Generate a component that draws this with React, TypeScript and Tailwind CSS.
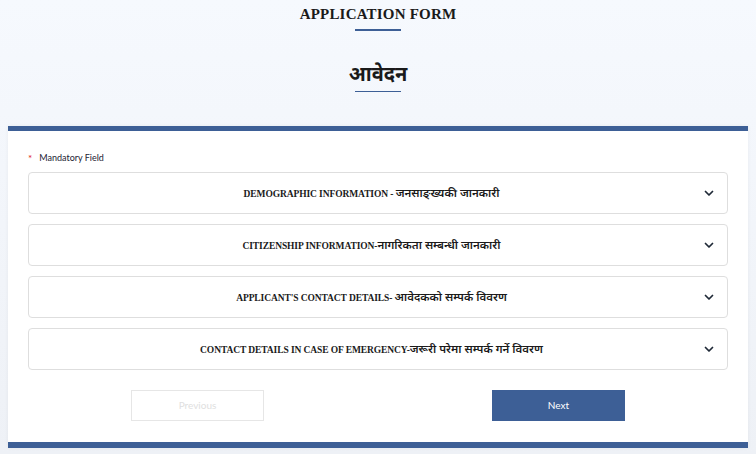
import React from "react";

const items: [string, string][] = [
  ["DEMOGRAPHIC INFORMATION - ", "जनसाङ्ख्यकी जानकारी"],
  ["CITIZENSHIP INFORMATION-", "नागरिकता सम्बन्धी जानकारी"],
  ["APPLICANT'S CONTACT DETAILS- ", "आवेदकको सम्पर्क विवरण"],
  ["CONTACT DETAILS IN CASE OF EMERGENCY-", "जरूरी परेमा सम्पर्क गर्ने विवरण"],
];

function Chevron() {
  return (
    <svg width="12" height="12" viewBox="0 0 24 24" fill="none" stroke="#1f2937" strokeWidth="3.5" strokeLinecap="round" strokeLinejoin="round">
      <path d="M5 9l7 7 7-7" />
    </svg>
  );
}

export default function App() {
  return (
    <div className="w-[756px] h-[454px] overflow-hidden bg-gradient-to-b from-[#f6f9fe] to-[#eef1f6] flex flex-col items-center" style={{ fontFamily: '"Liberation Serif", "Noto Sans", serif' }}>
      <div className="flex flex-col items-center pt-[4px]">
        <h1 className="text-[15px] leading-[20px] font-bold text-[#1a1a1a] tracking-[0.2px]" style={{ fontFamily: '"Liberation Serif", serif' }}>APPLICATION FORM</h1>
        <div className="w-[46px] h-[1.5px] bg-[#3d5f96] mt-[5px]" />
        <h2 className="mt-[30px] text-[20px] leading-[26px] font-bold text-[#1a1a1a]" style={{ fontFamily: '"Noto Sans", sans-serif' }}>आवेदन</h2>
        <div className="w-[46px] h-[1.5px] bg-[#3d5f96] mt-[4px]" />
      </div>
      <div className="mt-[34px] w-[740px] bg-white border-t-[5px] border-b-[6px] border-[#3d5f96] shadow-[0_0_4px_rgba(0,0,0,0.05)] px-[20px] pt-[21px] pb-[21px]">
        <div className="flex items-center gap-[7px] text-[9px] text-[#223] h-[12px]" style={{ fontFamily: 'Lato, sans-serif' }}>
          <span className="text-[#e02424] text-[10px] leading-none">*</span>
          <span>Mandatory Field</span>
        </div>
        <div className="mt-[8px] flex flex-col gap-[10px]">
          {items.map(([en, ne]) => (
            <div key={en} className="h-[42px] border border-[#dedede] rounded-[4px] flex items-center relative">
              <span className="flex-1 pr-[13px] text-center text-[#1a1a1a] whitespace-pre leading-[16px]">
                <span className="text-[9.5px] font-bold tracking-[-0.1px]" style={{ fontFamily: '"Liberation Serif", serif' }}>{en}</span>
                <span className="text-[11.5px] font-semibold" style={{ fontFamily: '"Noto Sans", sans-serif' }}>{ne}</span>
              </span>
              <span className="absolute right-[12px] top-[14px]"><Chevron /></span>
            </div>
          ))}
        </div>
        <div className="mt-[20px] flex justify-between px-[103px]">
          <button className="w-[133px] h-[31px] border border-[#e6e6e6] text-[10px] text-[#e0e0e0] bg-white" style={{ fontFamily: 'Lato, sans-serif' }}>Previous</button>
          <button className="w-[133px] h-[31px] bg-[#3d5f96] text-[10px] text-white" style={{ fontFamily: 'Lato, sans-serif' }}>Next</button>
        </div>
      </div>
    </div>
  );
}
